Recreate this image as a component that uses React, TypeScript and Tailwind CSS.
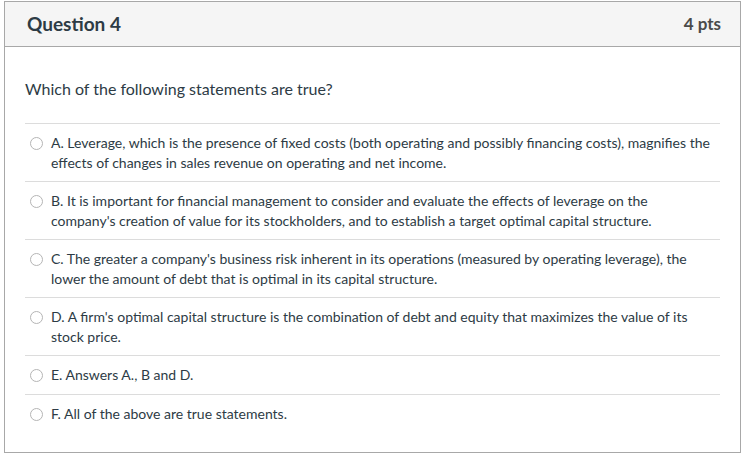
const options = [
  'A. Leverage, which is the presence of fixed costs (both operating and possibly financing costs), magnifies the effects of changes in sales revenue on operating and net income.',
  "B. It is important for financial management to consider and evaluate the effects of leverage on the company's creation of value for its stockholders, and to establish a target optimal capital structure.",
  "C. The greater a company's business risk inherent in its operations (measured by operating leverage), the lower the amount of debt that is optimal in its capital structure.",
  "D. A firm's optimal capital structure is the combination of debt and equity that maximizes the value of its stock price.",
  'E. Answers A., B and D.',
  'F. All of the above are true statements.',
]

export default function App() {
  return (
    <div className="min-h-[454px] bg-white pt-[1px] pl-[4px] pr-[2px] font-['Lato',sans-serif] text-[#2d3b45]">
      <div className="border border-[#a8a8a8]">
        {/* header */}
        <div className="flex h-[45px] items-center justify-between border-b border-[#a8a8a8] bg-[#f5f5f5] pl-[22px] pr-[19px]">
          <h2 className="text-[19px] font-bold">Question 4</h2>
          <span className="text-[17px] font-bold text-[#4a4a4a]">4 pts</span>
        </div>

        <div className="px-[20px] pb-[20px]">
          <p className="pt-[31px] pb-[23px] text-[16px] leading-[22px]">
            Which of the following statements are true?
          </p>

          <div>
            {options.map(opt => (
              <div key={opt} className="flex items-start border-t border-[#dcdcdc] py-[9px] pl-[5px] pr-[8px]">
                <span className="mt-[4px] mr-[8px] h-[13px] w-[13px] shrink-0 rounded-full border border-[#b5b5b5] bg-white" />
                <span className="text-[14px] leading-[19.5px]">{opt}</span>
              </div>
            ))}
          </div>
        </div>
      </div>
    </div>
  )
}
